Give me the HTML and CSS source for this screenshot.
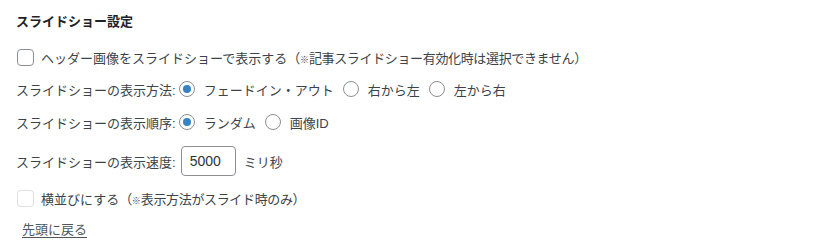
FILE: index.html
```html
<!DOCTYPE html>
<html lang="ja">
<head>
<meta charset="utf-8">
<link rel="stylesheet" href="styles.css">
</head>
<body>
<div class="panel">
  <h3 class="title">スライドショー設定</h3>
  <label class="row row-1">
    <span class="check"></span>
    <span>ヘッダー画像をスライドショーで表示する<span class="note">（<span class="kome">※</span>記事スライドショー有効化時は選択できません）</span></span>
  </label>
  <div class="row row-2">
    <span class="label">スライドショーの表示方法:</span>
    <span class="option"><span class="radio on"></span>フェードイン・アウト</span>
    <span class="option"><span class="radio"></span>右から左</span>
    <span class="option"><span class="radio"></span>左から右</span>
  </div>
  <div class="row row-3">
    <span class="label">スライドショーの表示順序:</span>
    <span class="option"><span class="radio on"></span>ランダム</span>
    <span class="option"><span class="radio"></span>画像ID</span>
  </div>
  <div class="row row-4">
    <span class="label">スライドショーの表示速度:</span>
    <span class="input">5000</span>
    <span class="unit">ミリ秒</span>
  </div>
  <label class="row row-5">
    <span class="check disabled"></span>
    <span>横並びにする<span class="note">（<span class="kome">※</span>表示方法がスライド時のみ）</span></span>
  </label>
  <a class="back" href="#">先頭に戻る</a>
</div>
</body>
</html>
```
FILE: styles.css
```css
html, body {
  margin: 0;
  padding: 0;
  background: #ffffff;
}
body {
  font-family: "Liberation Sans", "Noto Sans CJK JP", sans-serif;
  font-size: 13px;
  color: #3c434a;
}
.panel {
  display: flex;
  flex-direction: column;
  align-items: flex-start;
  padding: 0 16px;
}
.title {
  margin: 12px 0 0;
  font-size: 13px;
  line-height: 20px;
  font-weight: 700;
  color: #1d2327;
}
.row {
  display: flex;
  align-items: center;
  height: 24px;
  white-space: nowrap;
}
.row-1 { margin-top: 13px; }
.row-2 { margin-top: 8px; }
.row-3 { margin-top: 9px; }
.row-4 { margin-top: 12px; height: 30px; }
.row-5 { margin-top: 10px; }
.check {
  box-sizing: border-box;
  width: 17px;
  height: 17px;
  margin-left: 1px;
  margin-right: 7px;
  border: 1px solid #8c8f94;
  border-radius: 4px;
  background: #fff;
  flex: none;
}
.check.disabled {
  border-color: rgba(220, 220, 222, 0.9);
  background: rgba(255, 255, 255, 0.5);
}
.note { letter-spacing: -0.35px; }
.kome { font-size: 9px; letter-spacing: 0; }
.label { margin-right: 3px; }
.option {
  display: flex;
  align-items: center;
  margin-right: 9px;
}
.radio {
  box-sizing: border-box;
  width: 16px;
  height: 16px;
  margin-right: 9px;
  border: 1px solid #8c8f94;
  border-radius: 50%;
  background: #fff;
  display: flex;
  align-items: center;
  justify-content: center;
  flex: none;
}
.radio.on::before {
  content: "";
  width: 8px;
  height: 8px;
  border-radius: 50%;
  background: #3582c4;
}
.input {
  box-sizing: border-box;
  width: 55px;
  height: 30px;
  margin-left: 2px;
  padding: 0 8px;
  border: 1px solid #8c8f94;
  border-radius: 4px;
  display: flex;
  align-items: center;
  font-family: "Liberation Sans", sans-serif;
  font-size: 14px;
  color: #2c3338;
}
.unit { margin-left: 8px; }
.back {
  margin: 10px 0 0 6px;
  line-height: 20px;
  color: #50575e;
  text-decoration: underline;
  text-underline-offset: 3px;
}
```
